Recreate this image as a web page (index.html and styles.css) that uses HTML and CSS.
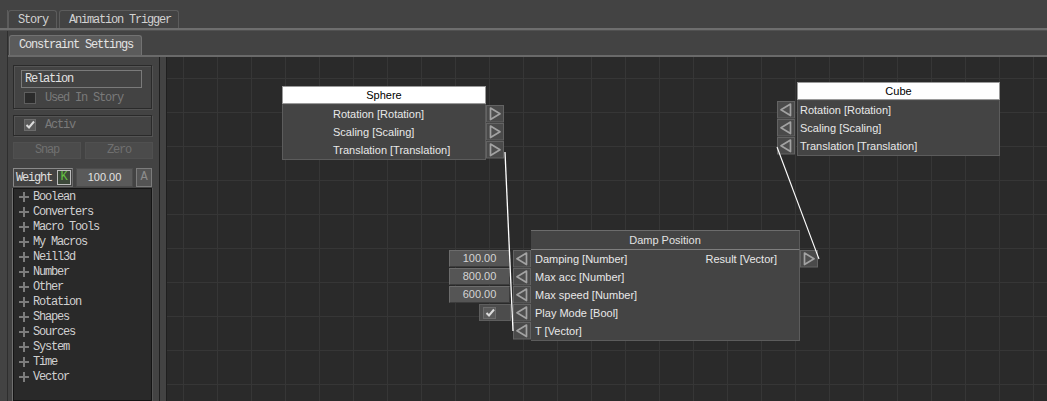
FILE: index.html
```html
<!DOCTYPE html>
<html>
<head>
<meta charset="utf-8">
<title>Constraint Settings</title>
<link rel="stylesheet" href="styles.css">
</head>
<body>
<div class="topbar">
  <div class="tab-stub"></div>
  <div class="tab tab-story">Story</div>
  <div class="tab tab-anim">Animation Trigger</div>
</div>
<div class="sep1"></div>
<div class="wrap">
  <div class="row2">
    <div class="tab2">Constraint Settings</div>
  </div>
  <div class="sep2"></div>
  <div class="main">
    <div class="side">
      <div class="group group1">
        <div class="field-rel">Relation</div>
        <div class="check-row"><span class="cb"></span><span>Used In Story</span></div>
      </div>
      <div class="group group2">
        <div class="check-row cr2"><span class="cb cb-on"><svg width="10" height="10" viewBox="0 0 10 10"><path d="M1.5 5 L4 7.5 L9 1.5" fill="none" stroke="#dcdcdc" stroke-width="2"/></svg></span><span>Activ</span></div>
      </div>
      <div class="btns">
        <div class="btn">Snap</div>
        <div class="btn">Zero</div>
      </div>
      <div class="weight">
        <div class="wlabel"><span>Weight</span><span class="kbox">K</span></div>
        <div class="wfield">100.00</div>
        <div class="abtn">A</div>
      </div>
      <div class="list">
        <div class="item"><span class="plus"></span>Boolean</div>
        <div class="item"><span class="plus"></span>Converters</div>
        <div class="item"><span class="plus"></span>Macro Tools</div>
        <div class="item"><span class="plus"></span>My Macros</div>
        <div class="item"><span class="plus"></span>Neill3d</div>
        <div class="item"><span class="plus"></span>Number</div>
        <div class="item"><span class="plus"></span>Other</div>
        <div class="item"><span class="plus"></span>Rotation</div>
        <div class="item"><span class="plus"></span>Shapes</div>
        <div class="item"><span class="plus"></span>Sources</div>
        <div class="item"><span class="plus"></span>System</div>
        <div class="item"><span class="plus"></span>Time</div>
        <div class="item"><span class="plus"></span>Vector</div>
      </div>
    </div>
    <div class="splitter"></div>
    <div class="canvas">
      <!-- Sphere -->
      <div class="node sphere">
        <div class="ncol w204">
          <div class="title title-sel">Sphere</div>
          <div class="nbody">
            <div class="row pad50">Rotation [Rotation]</div>
            <div class="row pad50">Scaling [Scaling]</div>
            <div class="row pad50">Translation [Translation]</div>
          </div>
        </div>
        <div class="pcol">
          <div class="pspace19"></div>
          <div class="pslot"><svg class="port" width="18" height="18" viewBox="0 0 18 18"><rect x="0.5" y="0.5" width="17" height="16.5" fill="#4a4a4a" stroke="#636363"/><path d="M4.5 3 L14 8.75 L4.5 14.5 Z" fill="#4f4f4f" stroke="#a2a2a2" stroke-width="1.7" stroke-linejoin="round"/></svg></div>
          <div class="pslot"><svg class="port" width="18" height="18" viewBox="0 0 18 18"><rect x="0.5" y="0.5" width="17" height="16.5" fill="#4a4a4a" stroke="#636363"/><path d="M4.5 3 L14 8.75 L4.5 14.5 Z" fill="#4f4f4f" stroke="#a2a2a2" stroke-width="1.7" stroke-linejoin="round"/></svg></div>
          <div class="pslot"><svg class="port" width="18" height="18" viewBox="0 0 18 18"><rect x="0.5" y="0.5" width="17" height="16.5" fill="#4a4a4a" stroke="#636363"/><path d="M4.5 3 L14 8.75 L4.5 14.5 Z" fill="#4f4f4f" stroke="#a2a2a2" stroke-width="1.7" stroke-linejoin="round"/></svg></div>
        </div>
      </div>

      <!-- Cube -->
      <div class="node cube">
        <div class="pcol">
          <div class="pspace19"></div>
          <div class="pslot"><svg class="port" width="18" height="18" viewBox="0 0 18 18"><rect x="0.5" y="0.5" width="17" height="16.5" fill="#4a4a4a" stroke="#636363"/><path d="M13.5 3 L4 8.75 L13.5 14.5 Z" fill="#4f4f4f" stroke="#a2a2a2" stroke-width="1.7" stroke-linejoin="round"/></svg></div>
          <div class="pslot"><svg class="port" width="18" height="18" viewBox="0 0 18 18"><rect x="0.5" y="0.5" width="17" height="16.5" fill="#4a4a4a" stroke="#636363"/><path d="M13.5 3 L4 8.75 L13.5 14.5 Z" fill="#4f4f4f" stroke="#a2a2a2" stroke-width="1.7" stroke-linejoin="round"/></svg></div>
          <div class="pslot"><svg class="port" width="18" height="18" viewBox="0 0 18 18"><rect x="0.5" y="0.5" width="17" height="16.5" fill="#4a4a4a" stroke="#636363"/><path d="M13.5 3 L4 8.75 L13.5 14.5 Z" fill="#4f4f4f" stroke="#a2a2a2" stroke-width="1.7" stroke-linejoin="round"/></svg></div>
        </div>
        <div class="ncol w203 ml2">
          <div class="title title-sel">Cube</div>
          <div class="nbody">
            <div class="row pad2">Rotation [Rotation]</div>
            <div class="row pad2">Scaling [Scaling]</div>
            <div class="row pad2">Translation [Translation]</div>
          </div>
        </div>
      </div>

      <!-- Damp Position -->
      <div class="node damp">
        <div class="icol">
          <div class="pspace20"></div>
          <div class="islot"><div class="vfield">100.00</div></div>
          <div class="islot"><div class="vfield">800.00</div></div>
          <div class="islot"><div class="vfield">600.00</div></div>
          <div class="islot"><div class="cbcell"><span class="cb cb-on cb-node"><svg width="10" height="10" viewBox="0 0 10 10"><path d="M1.5 5 L4 7.5 L9 1.5" fill="none" stroke="#dcdcdc" stroke-width="2"/></svg></span></div></div>
          <div class="islot"></div>
        </div>
        <div class="pcol ml3">
          <div class="pspace20"></div>
          <div class="pslot"><svg class="port" width="18" height="18" viewBox="0 0 18 18"><rect x="0.5" y="0.5" width="17" height="16.5" fill="#4a4a4a" stroke="#636363"/><path d="M13.5 3 L4 8.75 L13.5 14.5 Z" fill="#4f4f4f" stroke="#a2a2a2" stroke-width="1.7" stroke-linejoin="round"/></svg></div>
          <div class="pslot"><svg class="port" width="18" height="18" viewBox="0 0 18 18"><rect x="0.5" y="0.5" width="17" height="16.5" fill="#4a4a4a" stroke="#636363"/><path d="M13.5 3 L4 8.75 L13.5 14.5 Z" fill="#4f4f4f" stroke="#a2a2a2" stroke-width="1.7" stroke-linejoin="round"/></svg></div>
          <div class="pslot"><svg class="port" width="18" height="18" viewBox="0 0 18 18"><rect x="0.5" y="0.5" width="17" height="16.5" fill="#4a4a4a" stroke="#636363"/><path d="M13.5 3 L4 8.75 L13.5 14.5 Z" fill="#4f4f4f" stroke="#a2a2a2" stroke-width="1.7" stroke-linejoin="round"/></svg></div>
          <div class="pslot"><svg class="port" width="18" height="18" viewBox="0 0 18 18"><rect x="0.5" y="0.5" width="17" height="16.5" fill="#4a4a4a" stroke="#636363"/><path d="M13.5 3 L4 8.75 L13.5 14.5 Z" fill="#4f4f4f" stroke="#a2a2a2" stroke-width="1.7" stroke-linejoin="round"/></svg></div>
          <div class="pslot"><svg class="port" width="18" height="18" viewBox="0 0 18 18"><rect x="0.5" y="0.5" width="17" height="16.5" fill="#4a4a4a" stroke="#636363"/><path d="M13.5 3 L4 8.75 L13.5 14.5 Z" fill="#4f4f4f" stroke="#a2a2a2" stroke-width="1.7" stroke-linejoin="round"/></svg></div>
        </div>
        <div class="ncol w269">
          <div class="title title-plain">Damp Position</div>
          <div class="nbody dbody">
            <div class="row drow"><span>Damping [Number]</span><span>Result [Vector]</span></div>
            <div class="row drow"><span>Max acc [Number]</span></div>
            <div class="row drow"><span>Max speed [Number]</span></div>
            <div class="row drow"><span>Play Mode [Bool]</span></div>
            <div class="row drow"><span>T [Vector]</span></div>
          </div>
        </div>
        <div class="pcol">
          <div class="pspace20"></div>
          <div class="pslot"><svg class="port" width="18" height="18" viewBox="0 0 18 18"><rect x="0.5" y="0.5" width="17" height="16.5" fill="#4a4a4a" stroke="#636363"/><path d="M4.5 3 L14 8.75 L4.5 14.5 Z" fill="#4f4f4f" stroke="#a2a2a2" stroke-width="1.7" stroke-linejoin="round"/></svg></div>
        </div>
      </div>

      <svg class="wires" width="880" height="344" viewBox="0 0 880 344">
        <line x1="338" y1="95" x2="346" y2="274" stroke="#ffffff" stroke-width="1.3"/>
        <line x1="610" y1="90" x2="652" y2="202" stroke="#ffffff" stroke-width="1.1"/>
      </svg>
    </div>
  </div>
</div>
</body>
</html>
```
FILE: styles.css
```css
html, body {
  margin: 0;
  padding: 0;
}
body {
  background: #434343;
  width: 1047px;
  height: 401px;
  overflow: hidden;
  font-family: "Liberation Mono", "DejaVu Sans Mono", monospace;
  font-size: 12px;
  letter-spacing: -1.2px;
  color: #d6d6d6;
}

/* top tab bar */
.topbar {
  height: 28px;
  display: flex;
  align-items: flex-end;
}
.tab-stub {
  width: 8px;
  height: 18px;
  box-sizing: border-box;
  border-right: 1px solid #5c5c5c;
}
.tab {
  height: 18px;
  box-sizing: border-box;
  border: 1px solid #5c5c5c;
  border-bottom: none;
  border-radius: 3px 3px 0 0;
  padding-left: 9px;
  line-height: 18px;
  color: #d2d2d2;
}
.tab-story { width: 49px; }
.tab-anim { width: 120px; margin-left: 2px; }

.sep1 {
  height: 2px;
  background: #6e6e6e;
  border-bottom: 1px solid #515151;
}

.wrap {
  margin-left: 7px;
  border-left: 1px solid #2e2e2e;
}
.row2 {
  height: 24px;
  display: flex;
  align-items: flex-end;
  padding-left: 1px;
}
.tab2 {
  width: 133px;
  height: 20px;
  box-sizing: border-box;
  background: #5b5b5b;
  border: 1px solid #727272;
  border-bottom: none;
  border-radius: 3px 3px 0 0;
  padding-left: 9px;
  line-height: 19px;
  color: #e4e4e4;
}
.sep2 {
  height: 2px;
  background: #6a6a6a;
}

.main {
  display: flex;
  height: 344px;
}

/* left side panel */
.side {
  width: 151px;
  box-sizing: border-box;
  padding: 8px 0 0 5px;
  display: flex;
  flex-direction: column;
}
.group {
  width: 139px;
  box-sizing: border-box;
  border: 1px solid #2a2a2a;
  box-shadow: inset 1px 1px 0 #545454, 1px 1px 0 #545454;
}
.group1 { height: 44px; }
.group2 { height: 21px; margin-top: 6px; }
.field-rel {
  margin: 4px 0 0 7px;
  width: 121px;
  height: 18px;
  box-sizing: border-box;
  border: 1px solid #7a7a7a;
  padding-left: 3px;
  line-height: 17px;
  color: #e2e2e2;
}
.check-row {
  display: flex;
  align-items: center;
  gap: 9px;
  margin: 4px 0 0 10px;
  height: 12px;
  color: #7a7a7a;
}
.check-row.cr2 { margin-top: 3px; }
.cb {
  width: 12px;
  height: 12px;
  box-sizing: border-box;
  border: 1px solid #5e5e5e;
  background: #2b2b2b;
  display: flex;
  align-items: center;
  justify-content: center;
}
.cb-on {
  background: #5a5a5a;
  border-color: #6c6c6c;
}
.btns {
  display: flex;
  gap: 4px;
  margin-top: 6px;
}
.btn {
  width: 68px;
  height: 17px;
  box-sizing: border-box;
  background: #4b4b4b;
  border: 1px solid #505050;
  text-align: center;
  line-height: 15px;
  color: #707070;
}
.weight {
  display: flex;
  gap: 3px;
  margin-top: 9px;
  height: 19px;
}
.wlabel {
  width: 60px;
  box-sizing: border-box;
  border: 1px solid #6c6c6c;
  border-top-color: #8a8a8a;
  border-left-color: #8a8a8a;
  display: flex;
  align-items: center;
  justify-content: space-between;
  padding: 0 0 0 2px;
  color: #e0e0e0;
}
.kbox {
  width: 14px;
  height: 15px;
  box-sizing: border-box;
  border: 1px solid #bdbdbd;
  background: #3d493a;
  color: #63c23f;
  text-align: center;
  line-height: 13px;
  letter-spacing: 0;
  margin-right: 1px;
}
.wfield {
  width: 57px;
  box-sizing: border-box;
  background: #5a5a5a;
  border: 1px solid #4c4c4c;
  color: #e2e2e2;
  font-family: "Liberation Sans", Arial, sans-serif;
  font-size: 11px;
  letter-spacing: 0;
  text-align: center;
  line-height: 17px;
}
.abtn {
  width: 16px;
  box-sizing: border-box;
  border: 1px solid #7c7c7c;
  background: #545454;
  color: #8c8c8c;
  text-align: center;
  line-height: 17px;
  letter-spacing: 0;
}
.list {
  flex: 1;
  width: 139px;
  box-sizing: border-box;
  margin-top: 1px;
  border: 1px solid #141414;
  box-shadow: -1px 0 0 #707070, 1px 0 0 #555;
  background: #292929;
  padding: 0 0 0 5px;
}
.item {
  display: flex;
  align-items: center;
  gap: 4px;
  height: 15px;
  color: #d0d0d0;
}
.plus {
  width: 10px;
  height: 10px;
  flex: none;
  background:
    linear-gradient(#7c7c7c, #7c7c7c) center / 10px 2px no-repeat,
    linear-gradient(#7c7c7c, #7c7c7c) center / 2px 10px no-repeat;
}

.splitter {
  width: 8px;
  box-sizing: border-box;
  border-left: 1px solid #1f1f1f;
  border-right: 1px solid #1f1f1f;
}

/* node canvas */
.canvas {
  flex: 1;
  position: relative;
  overflow: hidden;
  background-color: #2a2a2a;
  background-image:
    linear-gradient(90deg, #363636 1px, transparent 1px),
    linear-gradient(#363636 1px, transparent 1px);
  background-size: 34px 34px;
  background-position: 16px 21px;
  font-family: "Liberation Sans", Arial, sans-serif;
  font-size: 11px;
  letter-spacing: 0;
  color: #e8e8e8;
}
.node {
  position: absolute;
  display: flex;
  align-items: flex-start;
}
.sphere { left: 115px; top: 29px; }
.cube { left: 610px; top: 25px; }
.damp { left: 282px; top: 173px; }

.ncol { display: flex; flex-direction: column; }
.w204 { width: 204px; }
.w203 { width: 203px; }
.w269 { width: 269px; }
.ml2 { margin-left: 2px; }
.ml3 { margin-left: 3px; }

.title {
  height: 18px;
  box-sizing: border-box;
  text-align: center;
  line-height: 17px;
}
.title-sel {
  background: #ffffff;
  border: 1px solid #9a9a9a;
  color: #000000;
}
.title-plain {
  height: 20px;
  background: #444444;
  border-top: 1px solid #6c6c6c;
  border-right: 1px solid #5a5a5a;
  border-bottom: 1px solid #7e7e7e;
  line-height: 18px;
  color: #e2e2e2;
}
.nbody {
  background: #444444;
  border: 1px solid #5c5c5c;
  border-top-color: #4a4a4a;
  display: flex;
  flex-direction: column;
}
.dbody {
  border-top: none;
  border-left: none;
}
.row {
  height: 18px;
  display: flex;
  align-items: center;
  white-space: nowrap;
}
.pad50 { padding-left: 50px; }
.pad2 { padding-left: 2px; }
.drow {
  justify-content: space-between;
  padding: 0 22px 0 4px;
}

.pcol { display: flex; flex-direction: column; width: 18px; }
.pspace19 { height: 19px; }
.pspace20 { height: 20px; }
.pslot {
  height: 18px;
  display: flex;
  align-items: flex-end;
}
.port { display: block; }

.icol { display: flex; flex-direction: column; width: 61px; }
.islot {
  height: 18px;
  display: flex;
}
.vfield {
  width: 61px;
  height: 17px;
  box-sizing: border-box;
  background: #555555;
  border: 1px solid #6c6c6c;
  border-right-color: #3c3c3c;
  border-bottom-color: #3c3c3c;
  text-align: center;
  line-height: 15px;
  color: #d4d4d4;
}
.cbcell {
  margin-left: auto;
  margin-right: -1px;
  width: 32px;
  height: 17px;
  box-sizing: border-box;
  background: #4c4c4c;
  border: 1px solid #5e5e5e;
  display: flex;
  align-items: center;
  padding-left: 3px;
}
.cb-node {
  width: 13px;
  height: 12px;
}

.wires {
  position: absolute;
  left: 0;
  top: 0;
  pointer-events: none;
}
```
